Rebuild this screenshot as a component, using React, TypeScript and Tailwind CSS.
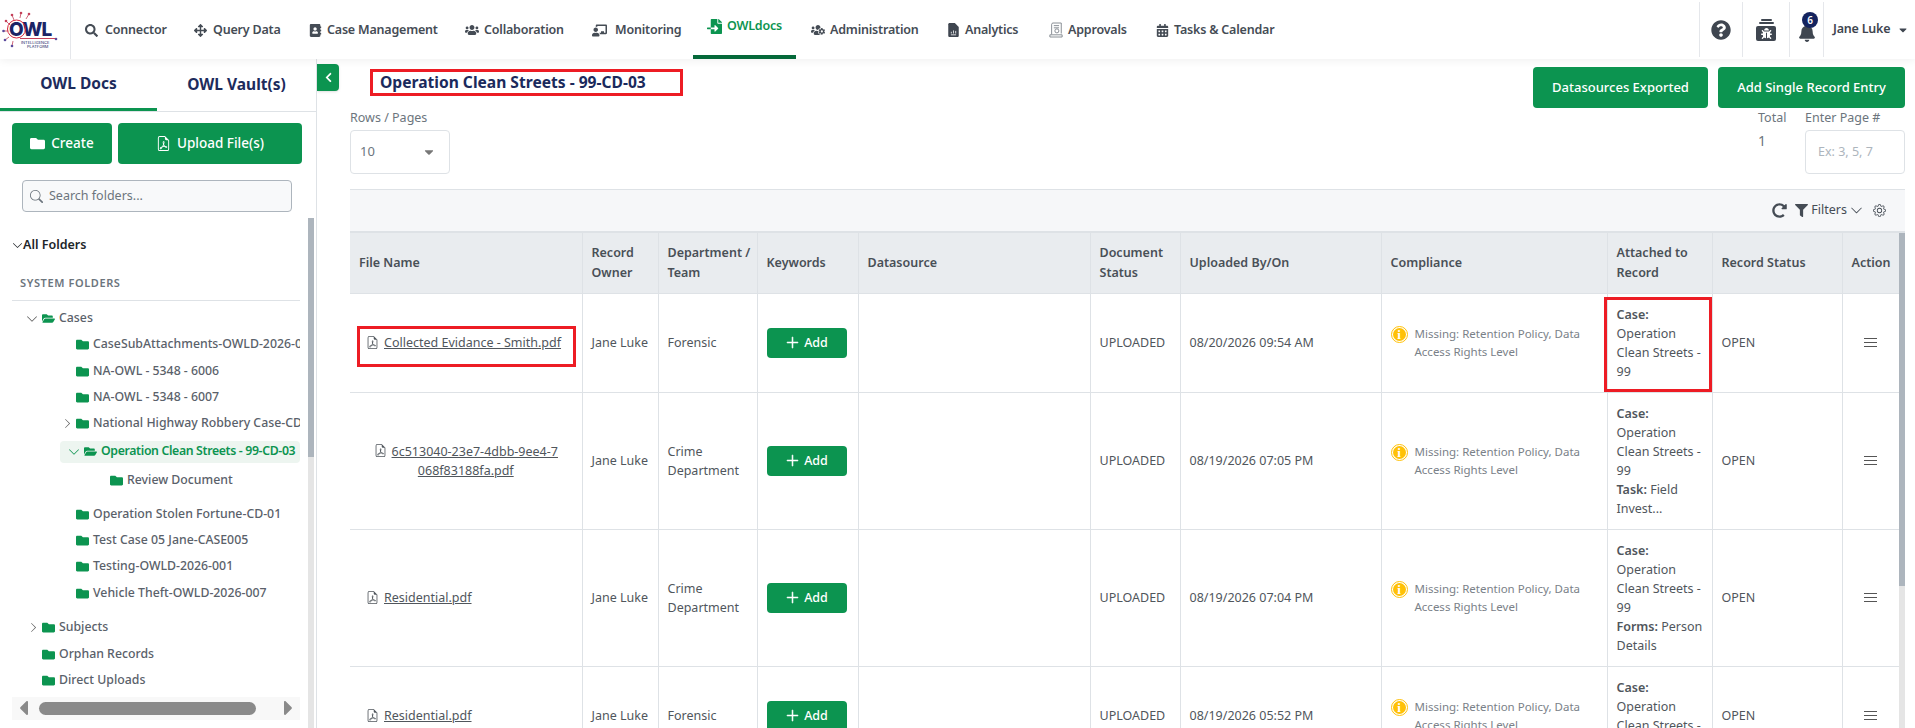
import { ReactNode } from "react";
import {
  FaSearch,
  FaArrowsAlt,
  FaAddressBook,
  FaUsers,
  FaChalkboardTeacher,
  FaFileImport,
  FaUsersCog,
  FaCalendarAlt,
  FaQuestionCircle,
  FaBell,
  FaBug,
  FaCaretDown,
  FaFolder,
  FaFolderOpen,
  FaFilter,
  FaRedoAlt,
  FaChevronLeft,
  FaCaretLeft,
  FaCaretRight,
} from "react-icons/fa";
import {
  BsChevronDown,
  BsChevronRight,
  BsFileEarmarkPdf,
  BsGear,
  BsSearch,
  BsPlusLg,
} from "react-icons/bs";

function Logo() {
  return (
    <svg viewBox="0 0 56 38" className="h-[38px] w-[56px]">
      <g stroke="#c4415a" strokeWidth="0.8" fill="none">
        <path d="M8 14 L4 10 M12 9 L10 4 M18 7 L19 2 M24 8 L27 3 M6 20 L1 20 M7 26 L3 29 M11 30 L10 35" />
      </g>
      <g fill="#c4415a">
        <circle cx="4" cy="10" r="1.3" />
        <circle cx="10" cy="4" r="1.3" />
        <circle cx="19" cy="2" r="1.3" />
        <circle cx="27" cy="3" r="1.3" />
      </g>
      <g fill="#5b4a9c">
        <circle cx="1.5" cy="20" r="1.3" />
        <circle cx="3" cy="29" r="1.3" />
        <circle cx="10" cy="35" r="1.3" />
        <circle cx="54" cy="28" r="1.3" />
      </g>
      <path d="M18 27.5 H53" stroke="#c4415a" strokeWidth="1" />
      <text x="7" y="25" fontSize="19" fontWeight="800" fill="#1b2466" fontFamily="Inter, sans-serif" letterSpacing="-0.8">
        OWL
      </text>
      <circle cx="14.5" cy="18" r="9" stroke="#d7263d" strokeWidth="1" fill="none" />
      <text x="19" y="32.5" fontSize="4" fill="#1b2466" fontFamily="Inter, sans-serif">
        INTELLIGENCE
      </text>
      <text x="25" y="37" fontSize="4" fill="#1b2466" fontFamily="Inter, sans-serif">
        PLATFORM
      </text>
    </svg>
  );
}

function AnalyticsIcon() {
  return (
    <svg viewBox="0 0 12 16" className="h-[14px] w-[11px]">
      <path d="M0 1.5C0 .7.7 0 1.5 0H7.5L12 4.5V14.5c0 .8-.7 1.5-1.5 1.5h-9C.7 16 0 15.3 0 14.5z" fill="#3f4650" />
      <path d="M3 13.5h6M3.5 12v-2M6 12V8.5M8.5 12v-3" stroke="#fff" strokeWidth="0.9" />
    </svg>
  );
}

function ApprovalsIcon() {
  return (
    <svg viewBox="0 0 16 18" className="h-[16px] w-[14px]" fill="none" stroke="#7a8088" strokeWidth="1">
      <path d="M3 14V2.5C3 1.7 3.7 1 4.5 1H14v12" />
      <path d="M5.5 4h6M5.5 6.5h6" />
      <circle cx="9" cy="10" r="2.3" />
      <path d="M1 14.5h14V17H1z" />
    </svg>
  );
}

function TimelineBug() {
  return (
    <div className="flex w-[20px] flex-col items-center">
      <div className="h-[2px] w-[11px] rounded-sm bg-[#3f4650]" />
      <div className="mt-[1px] h-[2px] w-[15px] rounded-sm bg-[#3f4650]" />
      <div className="mt-[2px] flex h-[15px] w-[20px] items-center justify-center rounded-[2px] bg-[#3f4650]">
        <FaBug className="text-[11px] text-white" />
      </div>
    </div>
  );
}

const navItems = [
  { label: "Connector", icon: <FaSearch className="text-[13px]" />, iconW: "w-[20px]", textW: "w-[60px]", gap: "mr-[29px]" },
  { label: "Query Data", icon: <FaArrowsAlt className="text-[13px]" />, iconW: "w-[19px]", textW: "w-[66px]", gap: "mr-[30px]" },
  { label: "Case Management", icon: <FaAddressBook className="text-[13px]" />, iconW: "w-[18px]", textW: "w-[109px]", gap: "mr-[29px]" },
  { label: "Collaboration", icon: <FaUsers className="text-[14px]" />, iconW: "w-[19px]", textW: "w-[79px]", gap: "mr-[29px]" },
  { label: "Monitoring", icon: <FaChalkboardTeacher className="text-[15px]" />, iconW: "w-[23px]", textW: "w-[63px]", gap: "" },
];

const navItemsAfter = [
  { label: "Administration", icon: <FaUsersCog className="text-[14px]" />, iconW: "w-[19px]", textW: "w-[88px]", gap: "mr-[30px]" },
  { label: "Analytics", icon: <AnalyticsIcon />, iconW: "w-[17px]", textW: "w-[55px]", gap: "mr-[29px]" },
  { label: "Approvals", icon: <ApprovalsIcon />, iconW: "w-[19px]", textW: "w-[60px]", gap: "mr-[28px]" },
  { label: "Tasks & Calendar", icon: <FaCalendarAlt className="text-[13px]" />, iconW: "w-[18px]", textW: "w-[102px]", gap: "" },
];

function NavItem({ label, icon, iconW, textW, gap }: { label: string; icon: ReactNode; iconW: string; textW: string; gap: string }) {
  return (
    <div className={`flex items-center pt-[1px] text-[#454c55] ${gap}`}>
      <span className={`flex items-center ${iconW}`}>{icon}</span>
      <span className={`text-[12.5px] font-semibold tracking-[-0.2px] whitespace-nowrap ${textW}`}>{label}</span>
    </div>
  );
}

function Header() {
  return (
    <header className="relative z-10 flex h-[59px] shrink-0 items-stretch bg-white shadow-[0_2px_8px_rgba(0,0,0,0.06)]">
      <div className="flex w-[71px] items-center justify-center border-r border-[#e5e7eb] pr-[10px]">
        <Logo />
      </div>
      <nav className="flex flex-1 items-center pl-[14px]">
        {navItems.map((n) => (
          <NavItem key={n.label} {...n} />
        ))}
        <div className="mx-[15px] flex h-full w-[103px] items-center justify-center gap-[5px] border-b-[4px] border-[#05693a] pb-[3px] text-[#0c9450]">
          <FaFileImport className="text-[15px]" />
          <span className="text-[12.5px] font-semibold tracking-[-0.2px]">OWLdocs</span>
        </div>
        {navItemsAfter.map((n) => (
          <NavItem key={n.label} {...n} />
        ))}
      </nav>
      <div className="flex items-stretch py-[2px] text-[#3f4650]">
        <div className="flex w-[43px] items-center justify-center border-l border-[#e5e7eb]">
          <FaQuestionCircle className="text-[20px]" />
        </div>
        <div className="flex w-[47px] items-center justify-center border-l border-[#e5e7eb]">
          <TimelineBug />
        </div>
        <div className="relative flex w-[34px] items-center justify-center border-l border-[#e5e7eb]">
          <FaBell className="mt-[6px] text-[18px]" />
          <span className="absolute left-[12px] top-[10px] flex h-[16px] w-[16px] items-center justify-center rounded-full bg-[#14235e] text-[10px] font-semibold text-white">
            6
          </span>
        </div>
        <div className="flex w-[92px] items-center border-l border-[#e5e7eb] pl-[9px]">
          <span className="text-[12.5px] font-semibold tracking-[-0.2px] whitespace-nowrap">Jane Luke</span>
          <FaCaretDown className="ml-[7px] text-[12px]" />
        </div>
      </div>
    </header>
  );
}

type TreeRow = {
  label: string;
  row: string;
  chevron?: "down" | "right";
  chevronBox?: string;
  open?: boolean;
  active?: boolean;
};

const treeRows: TreeRow[] = [
  { label: "Cases", row: "h-[26px] pl-[14px]", chevron: "down", chevronBox: "w-[16px]", open: true },
  { label: "CaseSubAttachments-OWLD-2026-001", row: "h-[26px] pl-[64px]" },
  { label: "NA-OWL - 5348 - 6006", row: "h-[27px] pl-[64px]" },
  { label: "NA-OWL - 5348 - 6007", row: "h-[26px] pl-[64px]" },
  { label: "National Highway Robbery Case-CD-01", row: "h-[26px] pl-[50px]", chevron: "right", chevronBox: "w-[14px]" },
  { label: "Operation Clean Streets - 99-CD-03", row: "ml-[48px] mt-[4px] h-[22px] rounded-[4px] bg-[#edf5f0] pl-[8px]", chevron: "down", chevronBox: "w-[16px]", open: true, active: true },
  { label: "Review Document", row: "mt-[5px] h-[26px] pl-[98px]" },
  { label: "Operation Stolen Fortune-CD-01", row: "mt-[8px] h-[26px] pl-[64px]" },
  { label: "Test Case 05 Jane-CASE005", row: "h-[26px] pl-[64px]" },
  { label: "Testing-OWLD-2026-001", row: "h-[26px] pl-[64px]" },
  { label: "Vehicle Theft-OWLD-2026-007", row: "h-[27px] pl-[64px]" },
  { label: "Subjects", row: "mt-[8px] h-[26px] pl-[16px]", chevron: "right", chevronBox: "w-[14px]" },
  { label: "Orphan Records", row: "h-[27px] pl-[30px]" },
  { label: "Direct Uploads", row: "h-[26px] pl-[30px]" },
];

function Tree() {
  return (
    <div className="flex flex-col overflow-hidden whitespace-nowrap text-[12.3px] font-medium text-[#5a616a]">
      {treeRows.map((r) => (
        <div key={r.label} className={`flex shrink-0 items-center ${r.row}`}>
          {r.chevron && (
            <span className={`flex shrink-0 items-center ${r.chevronBox} ${r.active ? "text-[#0c9450]" : "text-[#555]"}`}>
              {r.chevron === "down" ? <BsChevronDown className="text-[12px]" /> : <BsChevronRight className="text-[11px]" />}
            </span>
          )}
          {r.open ? <FaFolderOpen className="shrink-0 text-[13px] text-[#0c9450]" /> : <FaFolder className="shrink-0 text-[13px] text-[#0c9450]" />}
          <span className={`ml-[4px] ${r.active ? "font-semibold tracking-[-0.35px] text-[#0c9450]" : ""}`}>{r.label}</span>
        </div>
      ))}
    </div>
  );
}

function Sidebar() {
  return (
    <aside className="relative flex w-[317px] shrink-0 flex-col border-r border-[#dee2e6] bg-white">
      <div className="flex h-[53px] border-b border-[#dee2e6]">
        <div className="flex w-[157px] items-center justify-center border-b-[3px] border-[#0c9450] text-[15.5px] font-bold text-[#1d2b5c]">
          OWL Docs
        </div>
        <div className="flex flex-1 items-center justify-center text-[15.5px] font-bold text-[#1d2b5c]">OWL Vault(s)</div>
      </div>
      <div className="mt-[11px] flex gap-[6px] pl-[12px] pr-[14px]">
        <button className="flex h-[41px] w-[100px] items-center justify-center gap-[6px] rounded-[4px] bg-[#0c9450] text-[13.5px] font-medium text-white">
          <FaFolder className="text-[15px]" />
          Create
        </button>
        <button className="flex h-[41px] flex-1 items-center justify-center gap-[6px] rounded-[4px] bg-[#0c9450] text-[13.5px] font-medium text-white">
          <BsFileEarmarkPdf className="text-[15px]" />
          Upload File(s)
        </button>
      </div>
      <div className="ml-[22px] mt-[16px] flex h-[32px] w-[270px] items-center gap-[6px] rounded-[4px] border border-[#adb5bd] bg-[#f8f9fa] px-[7px]">
        <BsSearch className="text-[13px] text-[#6c757d]" />
        <span className="text-[12.5px] text-[#6c757d]">Search folders...</span>
      </div>
      <div className="ml-[12px] mt-[24px] flex w-[288px] flex-col">
        <div className="flex h-[18px] items-center text-[12.5px] font-semibold text-[#212529]">
          <BsChevronDown className="text-[11px]" />
          All Folders
        </div>
        <div className="mt-[21px] border-b border-[#dee2e6] pb-[8px] pl-[8px] text-[11px] font-semibold tracking-[0.6px] text-[#6c757d]">
          SYSTEM FOLDERS
        </div>
        <div className="mt-[5px]">
          <Tree />
        </div>
        <div className="mt-[3px] flex h-[23px] items-center bg-[#f8f8f8] px-[5px] text-[#8a8a8a]">
          <FaCaretLeft className="w-[13px] shrink-0 text-[24px]" />
          <div className="ml-[9px] h-[13px] w-[217px] rounded-full bg-[#8a8a8a]" />
          <div className="flex-1" />
          <FaCaretRight className="w-[13px] shrink-0 text-[24px]" />
        </div>
      </div>
      {/* folder tree scrollbar */}
      <div className="absolute bottom-0 right-[2px] top-[159px] w-[6px] bg-[#e5e5e5]">
        <div className="h-[239px] w-full bg-[#adb5bd]" />
      </div>
    </aside>
  );
}

function InfoIcon() {
  return (
    <span className="mt-[1px] flex h-[17px] w-[17px] shrink-0 items-center justify-center rounded-full border border-[#ffc107] p-[1px]">
      <span className="flex h-full w-full items-center justify-center rounded-full bg-[#ffc107] font-['Liberation_Serif',serif] text-[13px] font-bold leading-none text-white">i</span>
    </span>
  );
}

function Menu() {
  return (
    <div className="mx-auto flex w-[13px] flex-col gap-[3px]">
      <div className="h-px bg-[#555]" />
      <div className="h-px bg-[#555]" />
      <div className="h-px bg-[#555]" />
    </div>
  );
}

function RedBox({ className }: { className: string }) {
  return <div className={`pointer-events-none absolute border-[3px] border-[#ed1c24] ${className}`} />;
}

type Row = {
  file: string;
  wrap?: boolean;
  dept: string;
  date: string;
  extra?: { k: string; v: string };
  boxed?: boolean;
};

const rows: Row[] = [
  { file: "Collected Evidance - Smith.pdf", dept: "Forensic", date: "08/20/2026 09:54 AM", boxed: true },
  { file: "6c513040-23e7-4dbb-9ee4-7068f83188fa.pdf", wrap: true, dept: "Crime Department", date: "08/19/2026 07:05 PM", extra: { k: "Task:", v: "Field Invest..." } },
  { file: "Residential.pdf", dept: "Crime Department", date: "08/19/2026 07:04 PM", extra: { k: "Forms:", v: "Person Details" } },
  { file: "Residential.pdf", dept: "Forensic", date: "08/19/2026 05:52 PM" },
];

const headCls = "border-r border-[#dee2e6] px-[9px] text-left align-middle font-semibold";
const cellCls = "border-r border-b border-[#dee2e6] px-[9px] py-[11px] align-middle";

function RecordsTable() {
  return (
    <table className="w-[1549px] table-fixed border-collapse text-[12.5px] leading-[19px] text-[#50565c]">
      <thead>
        <tr className="h-[60px] border-b border-[#dee2e6] bg-[#e9ecef] leading-[20px] text-[#495057]">
          <th className={`${headCls} w-[232px]`}>File Name</th>
          <th className={`${headCls} w-[76px]`}>Record Owner</th>
          <th className={`${headCls} w-[99px] pr-0`}>Department / Team</th>
          <th className={`${headCls} w-[101px]`}>Keywords</th>
          <th className={`${headCls} w-[232px]`}>Datasource</th>
          <th className={`${headCls} w-[90px]`}>Document Status</th>
          <th className={`${headCls} w-[201px]`}>Uploaded By/On</th>
          <th className={`${headCls} w-[226px]`}>Compliance</th>
          <th className={`${headCls} w-[105px]`}>Attached to Record</th>
          <th className={`${headCls} w-[130px]`}>Record Status</th>
          <th className="px-[9px] text-left align-middle font-semibold">Action</th>
        </tr>
      </thead>
      <tbody>
        {rows.map((r, i) => (
          <tr key={i}>
            <td className={`relative ${cellCls}`}>
              {r.wrap ? (
                <div className="px-[14px] text-center underline break-all">
                  <BsFileEarmarkPdf className="mr-[5px] inline align-[-1px] text-[13px]" />
                  {r.file}
                </div>
              ) : (
                <div className="flex items-center gap-[5px] pl-[7px]">
                  <BsFileEarmarkPdf className="text-[13px]" />
                  <span className="underline">{r.file}</span>
                </div>
              )}
              {r.boxed && <RedBox className="bottom-[25px] left-[7px] right-[6px] top-[32px]" />}
            </td>
            <td className={cellCls}>Jane Luke</td>
            <td className={cellCls}>{r.dept}</td>
            <td className={cellCls}>
              <button className="flex h-[30px] w-[80px] items-center justify-center gap-[4px] rounded-[4px] bg-[#0c9450] font-medium text-white">
                <BsPlusLg className="text-[15px] [&_path]:stroke-white [&_path]:stroke-[0.6]" />
                Add
              </button>
            </td>
            <td className={cellCls}></td>
            <td className={cellCls}>UPLOADED</td>
            <td className={cellCls}>{r.date}</td>
            <td className={cellCls}>
              <div className="flex gap-[7px] text-[11.5px] leading-[18px] text-[#7a8188]">
                <InfoIcon />
                <span>Missing: Retention Policy, Data Access Rights Level</span>
              </div>
            </td>
            <td className={`relative ${cellCls}`}>
              <div className="font-semibold">Case:</div>
              <div>Operation Clean Streets - 99</div>
              {r.extra && (
                <div>
                  <span className="font-semibold">{r.extra.k}</span> {r.extra.v}
                </div>
              )}
              {r.boxed && <RedBox className="-left-[4px] bottom-0 right-0 top-[3px]" />}
            </td>
            <td className={cellCls}>OPEN</td>
            <td className="border-b border-[#dee2e6] px-[9px] align-middle">
              <Menu />
            </td>
          </tr>
        ))}
      </tbody>
    </table>
  );
}

function Main() {
  return (
    <main className="relative flex min-w-0 flex-1 flex-col overflow-hidden bg-white pl-[33px] pr-[10px] pt-[8px]">
      <button className="absolute left-0 top-[5px] flex h-[27px] w-[22px] items-center justify-center rounded-r-[4px] bg-[#0c9450] text-white shadow-sm">
        <FaChevronLeft className="text-[11px]" />
      </button>
      <div className="flex h-[41px] shrink-0 items-start justify-between">
        <div className="ml-[20px] mt-[2px] flex h-[27px] w-[313px] items-center border-[3px] border-[#ed1c24] pl-[7px] text-[15.6px] font-bold text-[#1b2a5c]">
          Operation Clean Streets - 99-CD-03
        </div>
        <div className="flex gap-[10px]">
          <button className="flex h-[41px] w-[175px] items-center justify-center rounded-[4px] bg-[#0c9450] text-[13px] font-medium text-white">
            Datasources Exported
          </button>
          <button className="flex h-[41px] w-[187px] items-center justify-center rounded-[4px] bg-[#0c9450] text-[13px] font-medium text-white">
            Add Single Record Entry
          </button>
        </div>
      </div>
      <div className="mt-[1px] flex h-[73px] shrink-0 justify-between text-[12.5px] text-[#6c757d]">
        <div>
          <div className="h-[21px] leading-[18px]">Rows / Pages</div>
          <div className="flex h-[44px] w-[100px] items-center justify-between rounded-[4px] border border-[#dee2e6] pl-[9px] pr-[13px] text-[13px]">
            10
            <FaCaretDown className="text-[14px] text-[#777]" />
          </div>
        </div>
        <div className="flex gap-[19px]">
          <div className="w-[28px] whitespace-nowrap">
            <div className="h-[21px] leading-[18px]">Total</div>
            <div className="text-[14px] text-[#6c757d]">1</div>
          </div>
          <div className="w-[100px]">
            <div className="h-[21px] leading-[18px] whitespace-nowrap">Enter Page #</div>
            <div className="flex h-[44px] items-center rounded-[4px] border border-[#dee2e6] pl-[12px] text-[#adb5bd]">Ex: 3, 5, 7</div>
          </div>
        </div>
      </div>
      <div className="mt-[7px] flex h-[42px] w-[1555px] shrink-0 items-center justify-end border-t border-[#dee2e6] bg-[#f6f7f9] pr-[19px] text-[#454c55]">
        <FaRedoAlt className="text-[15px]" />
        <FaFilter className="ml-[8px] text-[13px]" />
        <span className="ml-[3px] text-[12.5px]">Filters</span>
        <BsChevronDown className="ml-[3px] text-[13px]" />
        <BsGear className="ml-[10px] text-[13px]" />
      </div>
      <div className="relative w-[1555px] shrink-0 border-t-[2px] border-[#dee2e6]">
        <RecordsTable />
        <div className="absolute bottom-0 right-0 top-0 w-[6px] bg-[#e5e5e5]">
          <div className="h-[353px] w-full bg-[#adb5bd]" />
        </div>
      </div>
    </main>
  );
}

export default function App() {
  return (
    <div className="flex h-[728px] w-[1915px] flex-col overflow-hidden bg-white font-['Noto_Sans',sans-serif]">
      <Header />
      <div className="flex min-h-0 flex-1">
        <Sidebar />
        <Main />
      </div>
    </div>
  );
}
